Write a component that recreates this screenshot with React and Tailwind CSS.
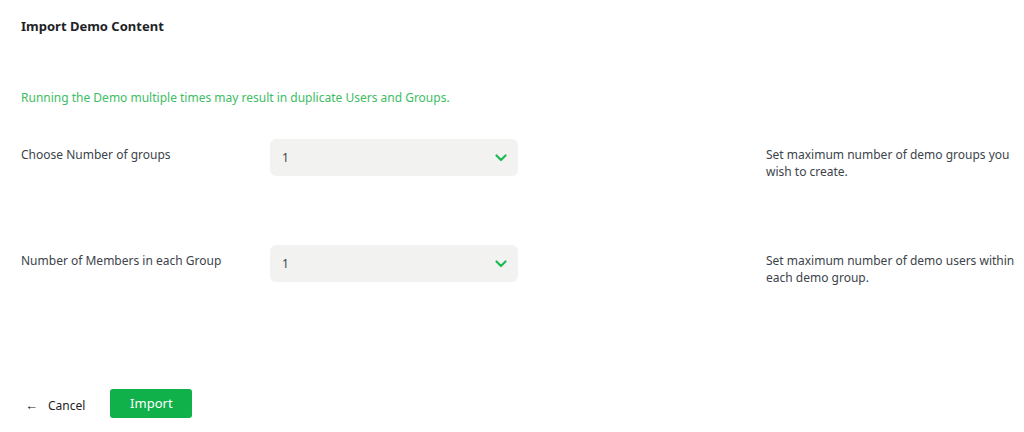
import React, { useState } from 'react';

const rows = [
  {
    id: 'groups',
    label: 'Choose Number of groups',
    help: 'Set maximum number of demo groups you wish to create.',
  },
  {
    id: 'members',
    label: 'Number of Members in each Group',
    help: 'Set maximum number of demo users within each demo group.',
  },
];

const Chevron = () => (
  <svg width="12" height="8" viewBox="0 0 12 8" fill="none" className="shrink-0">
    <path d="M1.5 1.5L6 6L10.5 1.5" stroke="#1eb955" strokeWidth="2.2" strokeLinecap="round" strokeLinejoin="round" />
  </svg>
);

const App = () => {
  const [values, setValues] = useState({ groups: '1', members: '1' });

  return (
    <div className="w-[1024px] h-[432px] bg-white pl-[21px] font-['Noto_Sans','Open_Sans',sans-serif] text-[12px] text-[#3c434a]">
      <h2 className="pt-[17px] text-[13px] leading-[18px] font-bold text-[#1d2327]">Import Demo Content</h2>

      <p className="mt-[54px] leading-[18px] text-[#3dbd63]">
        Running the Demo multiple times may result in duplicate Users and Groups.
      </p>

      <div className="mt-[32px] flex flex-col gap-[65px]">
        {rows.map((row) => (
          <div key={row.id} className="flex items-start">
            <label className="w-[249px] shrink-0 pt-[7px] leading-[17px]">{row.label}</label>
            <div className="relative w-[248px] h-[37px] shrink-0">
              <select
                value={values[row.id]}
                onChange={(e) => setValues({ ...values, [row.id]: e.target.value })}
                className="appearance-none w-full h-full bg-[#f2f2f0] rounded-[6px] pl-[12px] pr-8 text-[12px] text-[#3c434a] outline-none"
              >
                {[1, 2, 3, 4, 5].map((n) => (
                  <option key={n} value={n}>{n}</option>
                ))}
              </select>
              <span className="pointer-events-none absolute right-[11px] top-[15px]">
                <Chevron />
              </span>
            </div>
            <p className="ml-[248px] w-[254px] shrink-0 pt-[7px] leading-[17px]">{row.help}</p>
          </div>
        ))}
      </div>

      <div className="mt-[103px] flex items-center">
        <button className="flex items-center gap-[10px] pl-[4px] pt-[4px] text-[#1d2327]">
          <span className="text-[13px]">←</span>
          <span>Cancel</span>
        </button>
        <button className="ml-[25px] w-[82px] h-[29px] rounded-[3px] bg-[#10b04b] text-white text-[13px]">
          Import
        </button>
      </div>
    </div>
  );
};

export default App;
